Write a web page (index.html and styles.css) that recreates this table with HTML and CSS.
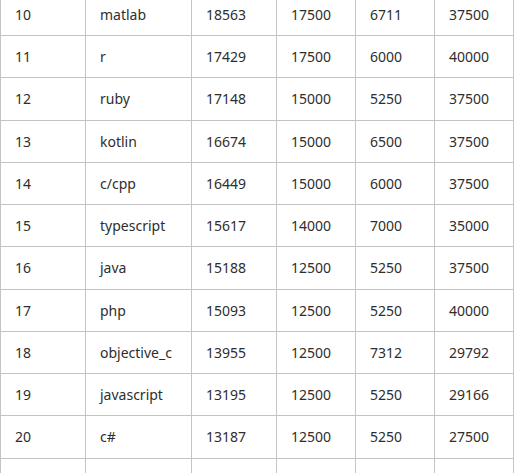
FILE: index.html
```html
<!DOCTYPE html>
<html>
<head>
<meta charset="utf-8">
<link rel="stylesheet" href="styles.css">
</head>
<body>
<table class="grid">
  <tbody>
    <tr><td class="w-rank">10</td><td class="w-lang">matlab</td><td class="w-num">18563</td><td class="w-sm">17500</td><td class="w-sm">6711</td><td class="w-sm">37500</td></tr>
    <tr><td>11</td><td>r</td><td>17429</td><td>17500</td><td>6000</td><td>40000</td></tr>
    <tr><td>12</td><td>ruby</td><td>17148</td><td>15000</td><td>5250</td><td>37500</td></tr>
    <tr><td>13</td><td>kotlin</td><td>16674</td><td>15000</td><td>6500</td><td>37500</td></tr>
    <tr><td>14</td><td>c/cpp</td><td>16449</td><td>15000</td><td>6000</td><td>37500</td></tr>
    <tr><td>15</td><td>typescript</td><td>15617</td><td>14000</td><td>7000</td><td>35000</td></tr>
    <tr><td>16</td><td>java</td><td>15188</td><td>12500</td><td>5250</td><td>37500</td></tr>
    <tr><td>17</td><td>php</td><td>15093</td><td>12500</td><td>5250</td><td>40000</td></tr>
    <tr><td>18</td><td>objective_c</td><td>13955</td><td>12500</td><td>7312</td><td>29792</td></tr>
    <tr><td>19</td><td>javascript</td><td>13195</td><td>12500</td><td>5250</td><td>29166</td></tr>
    <tr><td>20</td><td>c#</td><td>13187</td><td>12500</td><td>5250</td><td>27500</td></tr>
    <tr><td></td><td></td><td></td><td></td><td></td><td></td></tr>
  </tbody>
</table>
</body>
</html>
```

FILE: styles.css
```css
html, body {
  margin: 0;
  padding: 0;
  background: #ffffff;
  overflow: hidden;
}

.grid {
  border-collapse: separate;
  border-spacing: 0;
  table-layout: fixed;
  width: 514px;
  margin-top: -6.27px;
  font-family: "Noto Sans", "Open Sans", sans-serif;
  font-size: 14px;
  color: #2e2e2e;
}

.grid td {
  box-sizing: border-box;
  border-right: 1px solid #c4c4c4;
  border-bottom: 1px solid #c4c4c4;
  padding: 10px 14px;
  line-height: 21.27px;
  height: 42.27px;
  white-space: nowrap;
  text-align: left;
  vertical-align: middle;
}

.grid td:first-child {
  border-left: 1px solid #c4c4c4;
}

.w-rank { width: 86px; }
.w-lang { width: 106px; }
.w-num { width: 85px; }
.w-sm { width: 79px; }
```
